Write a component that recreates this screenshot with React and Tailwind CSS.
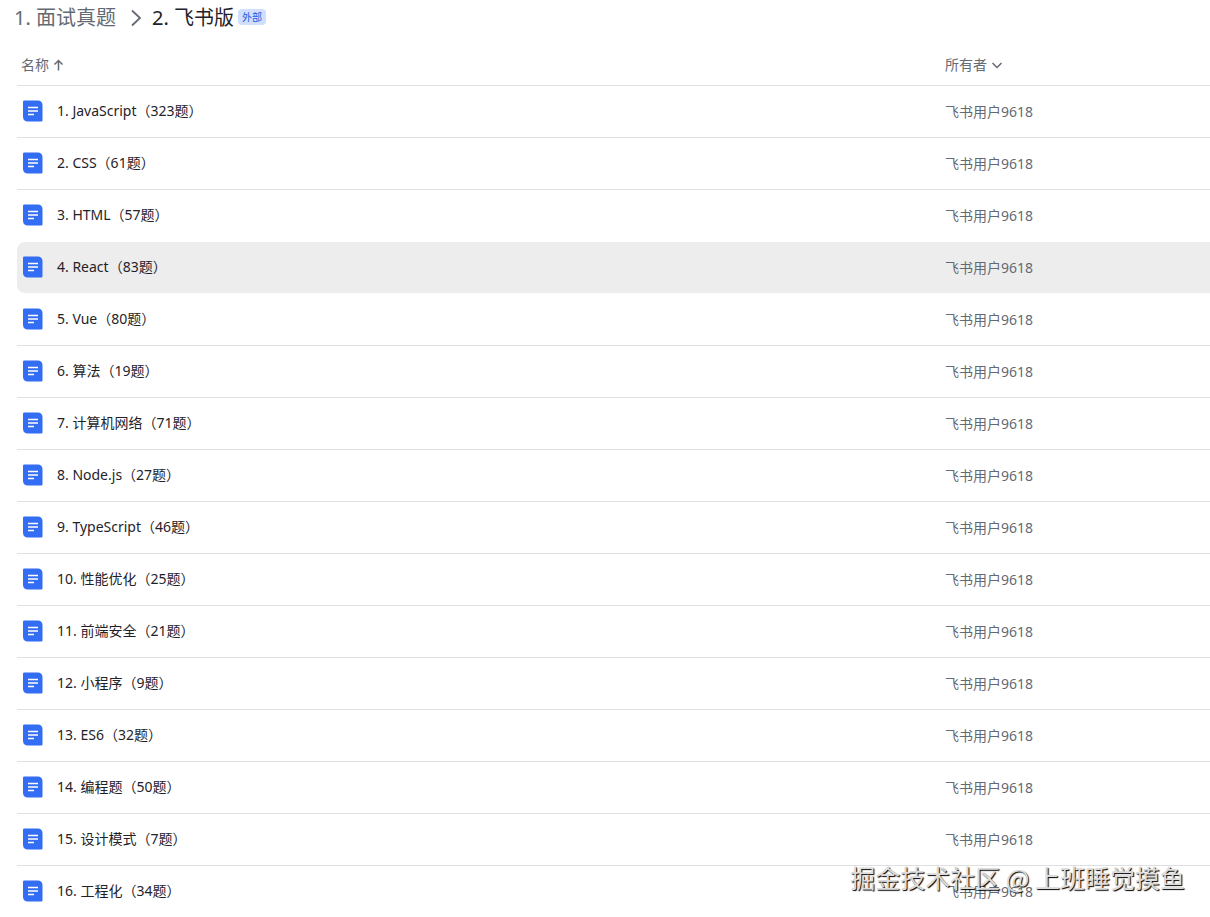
import React from 'react';

const docs = [
  '1. JavaScript（323题）',
  '2. CSS（61题）',
  '3. HTML（57题）',
  '4. React（83题）',
  '5. Vue（80题）',
  '6. 算法（19题）',
  '7. 计算机网络（71题）',
  '8. Node.js（27题）',
  '9. TypeScript（46题）',
  '10. 性能优化（25题）',
  '11. 前端安全（21题）',
  '12. 小程序（9题）',
  '13. ES6（32题）',
  '14. 编程题（50题）',
  '15. 设计模式（7题）',
  '16. 工程化（34题）',
];

const activeIndex = 3;

const rowClass = (index) => {
  if (index === activeIndex) {
    return 'h-[52px] [&>td]:border-transparent [&>td]:bg-[#ededed] [&>td:first-child]:rounded-l-lg';
  }
  // the line above the active row is hidden too
  if (index === activeIndex - 1 || index === docs.length - 1) {
    return 'h-[52px] [&>td]:border-transparent';
  }
  return 'h-[52px] [&>td]:border-[#dee0e3]';
};

const DocIcon = () => (
  <svg width="20" height="22" viewBox="0 0 20 22" className="shrink-0" aria-hidden="true">
    <path d="M1.2 0.5H14.5Q19.5 0.5 19.5 5.5V20.3Q19.5 21.5 18.3 21.5H5Q0 21.5 0 16.5V1.7Q0 0.5 1.2 0.5Z" fill="#336df4" />
    <path d="M5 7.5H15M5 11H15M5 14.5H11" stroke="#fff" strokeWidth="1.4" />
  </svg>
);

const App = () => {
  return (
    <div className="relative overflow-hidden bg-white pb-px font-['Noto_Sans','Noto_Sans_CJK_SC',sans-serif] text-sm text-[#646a73]">
      {/* Breadcrumb */}
      <nav className="flex h-9 items-center pl-[14px] text-xl">
        <a href="#parent">1. 面试真题</a>
        <svg width="12" height="18" viewBox="0 0 12 18" className="mr-2.5 ml-3.5" fill="none" stroke="currentColor" strokeWidth="1.8" aria-hidden="true">
          <path d="M2 1.5L10 9L2 16.5" />
        </svg>
        <h1 className="text-[#1f2329]">2. 飞书版</h1>
        <span className="mb-0.5 ml-1 rounded bg-[#d0dfff] px-1 text-[10px] leading-4 text-[#245bdb]">外部</span>
      </nav>

      <div className="pt-2 pl-[17px]">
        <table className="w-full table-fixed border-separate border-spacing-0 text-left">
          <thead>
            <tr className="h-[42px]">
              <th className="border-b border-[#dee0e3] pl-1 font-normal">
                <button className="flex items-center gap-1">
                  名称
                  <svg width="11" height="12" viewBox="0 0 11 12" fill="none" stroke="currentColor" strokeWidth="1.5" aria-hidden="true">
                    <path d="M5.5 11.5V1.5M1.5 5.5L5.5 1.5L9.5 5.5" />
                  </svg>
                </button>
              </th>
              <th className="w-[265px] border-b border-[#dee0e3] font-normal">
                <button className="flex items-center gap-1">
                  所有者
                  <svg width="12" height="12" viewBox="0 0 12 12" fill="none" stroke="currentColor" strokeWidth="1.5" aria-hidden="true">
                    <path d="M1.5 4L6 8.5L10.5 4" />
                  </svg>
                </button>
              </th>
            </tr>
          </thead>
          <tbody>
            {docs.map((name, index) => (
              <tr key={name} className={rowClass(index)}>
                <td className="border-b bg-clip-padding pb-0.5 pl-1.5">
                  <a href={`#doc-${index + 1}`} className="flex items-center gap-3.5 text-[#1f2329]">
                    <DocIcon />
                    {name}
                  </a>
                </td>
                <td className="border-b bg-clip-padding">飞书用户9618</td>
              </tr>
            ))}
          </tbody>
        </table>
      </div>

      {/* Watermark */}
      <p className="pointer-events-none absolute right-[25px] bottom-6 font-['Noto_Sans_CJK_SC',sans-serif] text-[25px] leading-9 text-[#dcdcdc] [text-shadow:1px_1px_1px_#000]">
        掘金技术社区 @ 上班睡觉摸鱼
      </p>
    </div>
  );
};

export default App;
